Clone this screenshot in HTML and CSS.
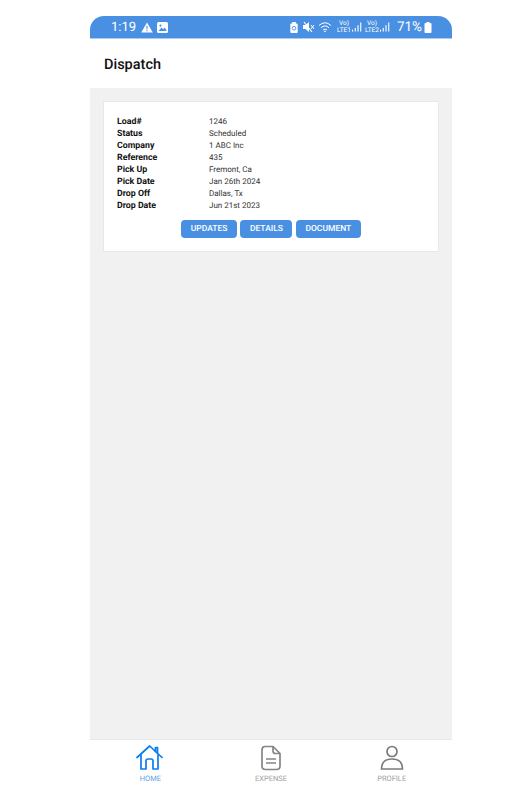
FILE: index.html
```html
<!DOCTYPE html>
<html>
    <head>
        <title>Dispatch</title>
        <link rel="stylesheet" href="styles.css">
    </head>
    <body>
        <div class="phone">
            <div class="statusbar">
                <span class="clock">1:19</span>
                <svg class="st-icon" width="12" height="11" viewBox="0 0 13 12"><path d="M6.5 0.5 L12.8 11.5 H0.2 Z" fill="#fff"/><rect x="5.9" y="4" width="1.2" height="4" fill="#4a90e2"/><rect x="5.9" y="8.8" width="1.2" height="1.3" fill="#4a90e2"/></svg>
                <svg class="st-icon" width="11" height="11" viewBox="0 0 11 11"><rect width="11" height="11" rx="1.5" fill="#fff"/><circle cx="3.5" cy="3.6" r="1.1" fill="#4a90e2"/><path d="M1.5 9 L4.5 5.6 L6.2 7.2 L7.8 5.4 L9.8 9 Z" fill="#4a90e2"/></svg>
                <span class="status-right">
                    <svg class="saver" width="8" height="11" viewBox="0 0 8 12"><path d="M2 0 H6 V1.5 H7 Q8 1.5 8 2.5 V11 Q8 12 7 12 H1 Q0 12 0 11 V2.5 Q0 1.5 1 1.5 H2 Z" fill="#fff"/><circle cx="4" cy="6.8" r="2" fill="none" stroke="#4a90e2"/></svg>
                    <svg class="mute" width="12" height="12" viewBox="0 0 12 12"><path d="M0 4 H2.5 L6 1 V11 L2.5 8 H0 Z" fill="#fff"/><path d="M1 1 L9 11" stroke="#fff" stroke-width="1.2"/><path d="M8 4 L11 8 M11 4 L8 8" stroke="#fff"/></svg>
                    <svg class="wifi" width="15" height="12" viewBox="0 0 15 12" fill="none" stroke="#fff"><path d="M1 4.5 Q7 -1 13 4.5"/><path d="M3 6.8 Q7 3 11 6.8"/><path d="M5 9 Q7 7.2 9 9"/><circle cx="7" cy="10.5" r="0.8" fill="#fff" stroke="none"/></svg>
                    <span class="lte">Vo)<br>LTE1</span>
                    <svg class="bars" width="10" height="10" viewBox="0 0 11 10" fill="#fff"><rect x="0" y="8" width="1.2" height="2"/><rect x="3" y="6" width="1.2" height="4"/><rect x="6" y="3" width="1.2" height="7"/><rect x="9" y="0" width="1.2" height="10"/></svg>
                    <span class="lte">Vo)<br>LTE2</span>
                    <svg class="bars" width="10" height="10" viewBox="0 0 11 10" fill="#fff"><rect x="0" y="8" width="1.2" height="2"/><rect x="3" y="6" width="1.2" height="4"/><rect x="6" y="3" width="1.2" height="7"/><rect x="9" y="0" width="1.2" height="10"/></svg>
                    <span class="pct">71%</span>
                    <svg class="batt" width="8" height="11" viewBox="0 0 7 11"><path d="M2 0 H5 V1 H6 Q7 1 7 2 V10 Q7 11 6 11 H1 Q0 11 0 10 V2 Q0 1 1 1 H2 Z" fill="#fff"/></svg>
                </span>
            </div>
            <div class="titlebar">Dispatch</div>
            <div class="content">
                <div class="card">
                    <div class="rows">
                        <div class="row"><b>Load#</b><span>1246</span></div>
                        <div class="row"><b>Status</b><span>Scheduled</span></div>
                        <div class="row"><b>Company</b><span>1 ABC Inc</span></div>
                        <div class="row"><b>Reference</b><span>435</span></div>
                        <div class="row"><b>Pick Up</b><span>Fremont, Ca</span></div>
                        <div class="row"><b>Pick Date</b><span>Jan 26th 2024</span></div>
                        <div class="row"><b>Drop Off</b><span>Dallas, Tx</span></div>
                        <div class="row"><b>Drop Date</b><span>Jun 21st 2023</span></div>
                    </div>
                    <div class="btns">
                        <div class="btn">UPDATES</div>
                        <div class="btn">DETAILS</div>
                        <div class="btn">DOCUMENT</div>
                    </div>
                </div>
            </div>
            <div class="tabbar">
                <div class="tab active">
                    <svg width="28" height="26" viewBox="0 0 28 26" fill="none" stroke="#0a7cf0" stroke-width="1.7" stroke-linejoin="round" stroke-linecap="round"><path d="M1 12.5 L13.7 1 L26 12.5"/><path d="M19.5 6.5 V2.5 H21.5 V8.5"/><path d="M5 10 V24 H10 V16 Q10 14 12 14 H15 Q17 14 17 16 V24 H22 V10"/></svg>
                    <span>HOME</span>
                </div>
                <div class="tab">
                    <svg width="22" height="26" viewBox="0 0 22 26" fill="none" stroke="#858585" stroke-width="1.7" stroke-linejoin="round"><path d="M5 1.5 H13 L20 8.5 V21 Q20 24.5 16.5 24.5 H5.5 Q2 24.5 2 21 V5 Q2 1.5 5 1.5 Z"/><path d="M13 1.5 V6 Q13 8.5 15.5 8.5 H20"/><path d="M6 14 H16 M6 18 H16"/></svg>
                    <span>EXPENSE</span>
                </div>
                <div class="tab">
                    <svg width="24" height="26" viewBox="0 0 24 26" fill="none" stroke="#7b7b7b" stroke-width="1.7"><circle cx="12" cy="6.5" r="5"/><path d="M1.5 24 Q1.5 14 12 14 Q22.5 14 22.5 24 Z" stroke-linejoin="round"/></svg>
                    <span>PROFILE</span>
                </div>
            </div>
        </div>
    </body>
</html>
```

FILE: styles.css
```css
html, body{
    margin: 0;
    background-color: #fff;
    font-family: Roboto, "Liberation Sans", sans-serif;
    text-rendering: geometricPrecision;
}
.phone{
    width: 362px;
    height: 774px;
    margin: 16px 0 0 90px;
    display: flex;
    flex-direction: column;
}
.statusbar{
    height: 22px;
    background-color: #4a90e2;
    border-radius: 14px 14px 0 0;
    border-bottom: 1px solid #a9cdf0;
    display: flex;
    align-items: center;
    color: #fff;
    padding: 0 20px 0 21px;
    gap: 4px;
}
.clock{
    font-size: 13px;
    margin-right: 1px;
}
.status-right{
    margin-left: auto;
    display: flex;
    align-items: center;
}
.mute{
    margin-left: 5px;
}
.wifi{
    margin: 0 1px 0 3px;
}
.lte{
    width: 14px;
    font-size: 6.5px;
    line-height: 7px;
    text-align: center;
    margin-left: 3px;
}
.bars{
    margin-left: 1px;
}
.pct{
    font-size: 13.5px;
    margin-left: 7px;
}
.batt{
    margin-left: 2px;
}
.titlebar{
    height: 49px;
    padding-left: 14px;
    font-size: 14.5px;
    font-weight: 500;
    line-height: 52px;
    color: #111;
}
.content{
    flex: 1;
    background-color: #f1f1f1;
    padding: 13px 13px 0 13px;
}
.card{
    background-color: #fff;
    border: 1px solid #e6e8ea;
    padding: 14px 13px 13px 13px;
}
.rows{
    margin-bottom: 8px;
}
.row{
    display: flex;
    height: 12px;
    line-height: 12px;
    font-size: 8px;
    color: #333;
}
.row b{
    width: 92px;
    font-size: 8.8px;
    font-weight: 700;
    color: #111;
}
.btns{
    display: flex;
    justify-content: center;
    gap: 3.5px;
}
.btn{
    background-color: #4a90e2;
    color: #fff;
    font-size: 8.5px;
    font-weight: 500;
    height: 18px;
    line-height: 18px;
    padding: 0 9.5px;
    border-radius: 4px;
}
.tabbar{
    height: 51px;
    border-top: 1px solid #e8e8e8;
    display: flex;
    box-sizing: border-box;
}
.tab{
    flex: 1;
    display: flex;
    flex-direction: column;
    align-items: center;
    padding-top: 5px;
    gap: 3px;
    font-size: 7.5px;
    color: #a0a0a0;
}
.tab.active{
    color: #5ea3e6;
}
```
